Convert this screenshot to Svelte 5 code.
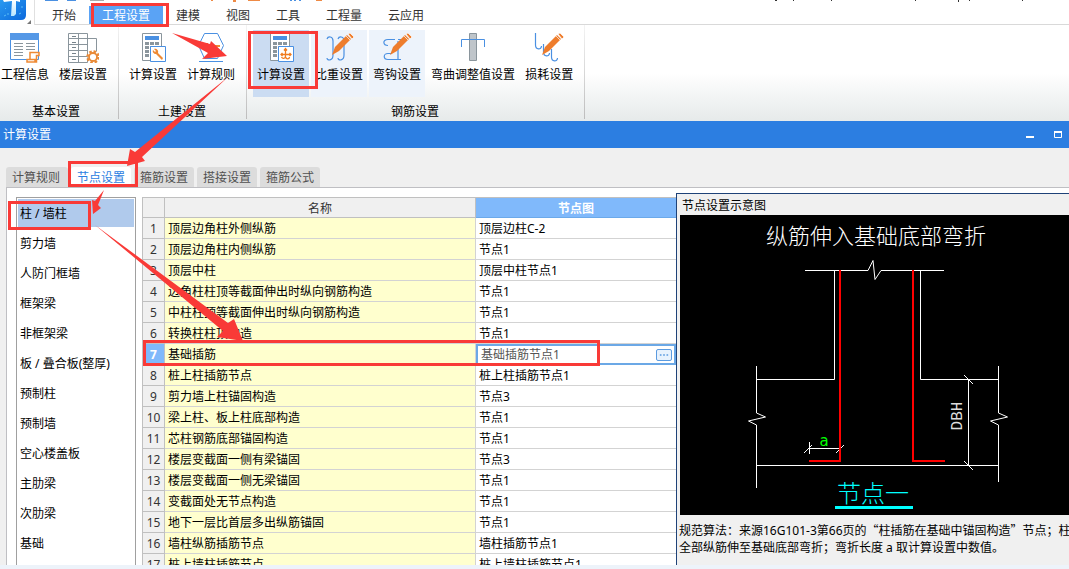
<script>
  const menus = ['开始', '工程设置', '建模', '视图', '工具', '工程量', '云应用'];
  const groups = [
    { name: '基本设置', kind: 'compact', tools: [['info', '工程信息'], ['floor', '楼层设置']] },
    { name: '土建设置', kind: '', tools: [['calc', '计算设置'], ['rule', '计算规则']] },
    {
      name: '钢筋设置', kind: '',
      tools: [
        ['steel', '计算设置', 'active'], ['weight', '比重设置', 'soft'], ['hook', '弯钩设置', 'soft'],
        ['bend', '弯曲调整值设置'], ['loss', '损耗设置']
      ]
    }
  ];
  const tabs = ['计算规则', '节点设置', '箍筋设置', '搭接设置', '箍筋公式'];
  const members = ['柱 / 墙柱', '剪力墙', '人防门框墙', '框架梁', '非框架梁', '板 / 叠合板(整厚)', '预制柱', '预制墙', '空心楼盖板', '主肋梁', '次肋梁', '基础'];
  const rows = [
    ['顶层边角柱外侧纵筋', '顶层边柱C-2'],
    ['顶层边角柱内侧纵筋', '节点1'],
    ['顶层中柱', '顶层中柱节点1'],
    ['边角柱柱顶等截面伸出时纵向钢筋构造', '节点1'],
    ['中柱柱顶等截面伸出时纵向钢筋构造', '节点1'],
    ['转换柱柱顶构造', '节点1'],
    ['基础插筋', '基础插筋节点1'],
    ['桩上柱插筋节点', '桩上柱插筋节点1'],
    ['剪力墙上柱锚固构造', '节点3'],
    ['梁上柱、板上柱底部构造', '节点1'],
    ['芯柱钢筋底部锚固构造', '节点1'],
    ['楼层变截面一侧有梁锚固', '节点3'],
    ['楼层变截面一侧无梁锚固', '节点1'],
    ['变截面处无节点构造', '节点1'],
    ['地下一层比首层多出纵筋锚固', '节点1'],
    ['墙柱纵筋插筋节点', '墙柱插筋节点1'],
    ['桩上墙柱插筋节点', '桩上墙柱插筋节点1']
  ];
  let menu = $state('工程设置');
  let tab = $state('节点设置');
  let member = $state('柱 / 墙柱');
  let node = $state('基础插筋节点1');
</script>

{#snippet calculator()}
  <path d="M5.500 .5h19v27h-19z" fill="#fff" stroke="#8a959c" />
  <path d="M8 3h14v4H8z" fill="#4a90e2" />
  <path d="M8 9h4v3H8zM13 9h4v3h-4zM18 9h4v3h-4zM8 13h4v3H8zM13 13h4v3h-4zM8 17h4v3H8zM8 21h4v3H8z" fill="#8a959c" />
  <path d="M13.500 13.500h15v15h-15z" fill="#fff" stroke="#4a90e2" />
{/snippet}

{#snippet pencil()}
  <path d="M9 22l3-8L24 2l4 4L16 18z" fill="#ee7d2d" />
  <path d="M25 1l2-1 4 4-2 2zM23 3l4 4" fill="#ee7d2d" stroke="#fff" stroke-width=".7" />
{/snippet}

{#snippet icon(name)}
  <svg class="icon" viewBox="0 0 32 30" aria-hidden="true">
    {#if name === 'info'}
      <path d="M1.500 .5h28v26h-28z" fill="#fff" stroke="#4a90e2" />
      <path d="M1 0h29v7H1z" fill="#5598e6" />
      <path d="M5 10.500h9M5 13.500h9M5 16.500h9M5 19.500h9M5 22.500h9M17 10.500h9M17 13.500h9M17 16.500h9" stroke="#8a959c" />
      <path d="M21 26V19.500h9v3h-2.500V29H18v-2.500h8V29" fill="#fff" stroke="#ee8a35" stroke-width="1.500" />
    {:else if name === 'floor'}
      <path d="M1.500 .5h19v29h-19zM1.500 5.500h19M1.500 11.500h19M1.500 17.500h19M1.500 23.500h19M11.500 0v29M20.500 5.500h9v13" fill="none" stroke="#8a959c" />
      <path d="M5 3.500h4M5 9.500h4M5 14.500h4M5 20.500h4M5 26.500h4" stroke="#77838b" />
      <circle cx="26" cy="24" r="5.500" fill="#fff" stroke="#e98a37" stroke-width="2.500" stroke-dasharray="2.500 1.800" />
      <circle cx="26" cy="24" r="4" fill="#fff" stroke="#e98a37" stroke-width="1.800" />
    {:else if name === 'calc'}
      {@render calculator()}
      <path d="M17 16c2-1 5 1 4 4l5 5-1 2-6-6c-2 0-4-2-3-4l2 2 1-1z" fill="#ee8a35" />
    {:else if name === 'rule'}
      <path d="M9.500 .5h13l6 12-6 13h-13l-6-13zM4 28.500h24" fill="#fff" stroke="#4a90e2" />
      <path d="M9 13h6M12 10v6M19 13h6" stroke="#ee8a35" stroke-width="2" />
    {:else if name === 'steel'}
      {@render calculator()}
      <path d="M16 21.500h10M20.500 16v7c0 3-3 3-4 1M20.500 24c1 3 4 2 4 0M19 17.500l1.500-2 1.500 2M17.500 20L16 21.500l1.500 1.500M24.500 20l1.500 1.500-1.500 1.500" fill="none" stroke="#f07c20" stroke-width="1.300" />
    {:else if name === 'weight'}
      <path d="M4 6c1-3 6-3 6 2v14c0 6-6 6-6 3M15 6c1-3 6-3 6 2v14c0 6-6 6-6 3" fill="none" stroke="#4a90e2" stroke-width="1.200" />
      {@render pencil()}
    {:else if name === 'hook'}
      <path d="M14 6.500H7c-6 0-5 6 0 6M17 6.500h6M11 20.500H7c-5 0-5 6 0 6h13M17 26.500V8" fill="none" stroke="#4a90e2" stroke-width="1.200" />
      {@render pencil()}
    {:else if name === 'bend'}
      <path d="M12.500 .5h7v27h-7z" fill="#bfc5ca" stroke="#8a959c" />
      <path d="M4.500 14V6.500h23V14" fill="none" stroke="#4a90e2" />
    {:else}
      <path d="M2.500 0v12c0 5 6 5 6 1M10.500 11v8c0 5 6 5 6 1M18.500 16v8c0 5 6 5 6 1" fill="none" stroke="#4a90e2" stroke-width="1.200" />
      {@render pencil()}
    {/if}
  </svg>
{/snippet}

<div class="app">
  <header class="menubar">
    <svg class="logo" viewBox="0 0 39 25" aria-hidden="true">
      <defs>
        <linearGradient id="logo-blue" x1="0" y1="0" x2="1" y2="1">
          <stop offset="0" stop-color="#2a9af0" />
          <stop offset="1" stop-color="#0b68dc" />
        </linearGradient>
        <linearGradient id="logo-stem" x1="0" y1="0" x2="0" y2="1">
          <stop offset="0" stop-color="#fff" />
          <stop offset="1" stop-color="#b8e6ff" />
        </linearGradient>
      </defs>
      <path d="M0 0h26v15q0 5-5 5H0z" fill="url(#logo-blue)" />
      <path d="M3 0h17v2l-4-1v13l-2 2h-3l1-15-8 1z" fill="url(#logo-stem)" />
      <path d="M4 16l2-1M19 14l2-1M22 6v2M5 8l1 1M8 13v2" stroke="#58bdf8" fill="none" />
      <path d="M31 20v4h-4z" fill="#777" />
      <path d="M34.500 0v25" stroke="#e0e0e0" />
    </svg>
    <nav>
      {#each menus as m}
        <button class:current={menu === m} onclick={() => (menu = m)}>{m}</button>
      {/each}
    </nav>
    <svg class="quick" viewBox="0 0 1034 2" aria-hidden="true">
      <path d="M10 0h13v1H10zM32 0h9v1h-9zM255 0h2v1h-2zM259 0h2v1h-2zM264 0h2v1h-2z" fill="#4a90e2" />
      <path d="M55 0h14v1H55z" fill="#aaa" />
      <path d="M176 0h2v1h-2zM198 0h3v2h-3zM213 0h12v1h-12zM281 0h6v1h-6z" fill="#ee8a45" />
      <path d="M740 0h2v1h-2zM758 0h1v1h-1zM796 0h1v1h-1zM880 0h1v1h-1zM923 0h1v2h-1zM934 0h1v1h-1zM987 0h1v1h-1z" fill="#333" />
    </svg>
  </header>

  <section class="ribbon">
    {#each groups as g}
      <div class="group {g.kind}">
        <div class="tools">
          {#each g.tools as [ic, label, mode]}
            <button class="tool {mode ?? ''}">{@render icon(ic)}<span>{label}</span></button>
          {/each}
        </div>
        <div class="group-name">{g.name}</div>
      </div>
    {/each}
  </section>

  <div class="titlebar">
    <h1>计算设置</h1>
    <div class="window-buttons">
      <button aria-label="最小化"><svg viewBox="0 0 8 8"><path d="M0 5h8v2H0z" fill="#fff" /></svg></button>
      <button aria-label="最大化"><svg viewBox="0 0 8 8"><path d="M.5 1v5.500h7V1" fill="none" stroke="#fff" /><path d="M0 0h8v2H0z" fill="#fff" /></svg></button>
    </div>
  </div>

  <main>
    <div class="tabs" role="tablist">
      {#each tabs as t}
        <button role="tab" aria-selected={tab === t} onclick={() => (tab = t)}>{t}</button>
      {/each}
    </div>
    <div class="workspace">
      <div class="members">
        {#each members as m}
          <button class:chosen={member === m} onclick={() => (member = m)}>{m}</button>
        {/each}
      </div>

      <div class="grid">
        <table>
          <colgroup><col class="c-num" /><col /><col class="c-node" /></colgroup>
          <thead>
            <tr><th></th><th>名称</th><th class="picked">节点图</th></tr>
          </thead>
          <tbody>
            {#each rows as [name, value], i}
              <tr>
                <th class:picked={i === 6}>{i + 1}</th>
                <td class="name">{name}</td>
                {#if i === 6}
                  <td class="edit">
                    <div class="editor">
                      <input aria-label="节点图" bind:value={node} />
                      <button aria-label="选择节点">
                        <svg viewBox="0 0 16 12"><path d="M3 5h2v2H3zM7 5h2v2H7zM11 5h2v2h-2z" fill="#5b9be0" /></svg>
                      </button>
                    </div>
                  </td>
                {:else}
                  <td>{value}</td>
                {/if}
              </tr>
            {/each}
          </tbody>
        </table>
      </div>

      <aside>
        <h2>节点设置示意图</h2>
        <svg class="drawing" viewBox="680 215 389 300" preserveAspectRatio="xMidYMid meet">
          <text x="876" y="244" class="caption">纵筋伸入基础底部弯折</text>
          <g fill="none" stroke="#fff">
            <path d="M805 270.500h63l5-10 2 19 6-9h63M834.500 270v109.500H756M920.500 270v109.500H999M756 465.500h243" />
            <path d="M756.500 366v47l9 4-17 4 8 4v63M998.500 366v47l9 4-17 4 8 4v57" />
            <path d="M968.500 379v87M964 375l9 9M964 461l9 9M809.500 442v12M809 448.500h31M804 453l8-8M836 453l8-8" />
          </g>
          <path d="M840 270v191h-31M913 270v191h32" fill="none" stroke="#f00" stroke-width="2" />
          <text x="824" y="446" class="offset">a</text>
          <text transform="translate(962 416) rotate(-90)" class="depth">DBH</text>
          <text x="873" y="502" class="node-name">节点一</text>
          <path d="M835 506h78v3h-78z" fill="#0ff" />
        </svg>
        <p>规范算法：来源16G101-3第66页的<span class="quoted">“柱插筋在基础中锚固构造”</span>节点；柱<br />全部纵筋伸至基础底部弯折；弯折长度 a 取计算设置中数值。</p>
      </aside>
    </div>
  </main>

  <svg class="notes" width="620" height="380" aria-hidden="true">
    <g fill="none" stroke="#f93a37" stroke-width="3">
      <path d="M92.500 4.500h75v21h-75zM249.500 32.500h67v55h-67zM69.500 162.500h67v23h-67zM9.500 202.500h80v26h-80zM144.500 341.500h454v23h-454z" />
    </g>
    <g fill="#f93a37">
      <path d="M172 33l38 11 1-3 16 15-25 3 6-6z" />
      <path d="M228 77l-86 80 3 4-18 5 3-17 5 3z" />
      <path d="M104 190l-6 15 3 3-8 6-1-14 3 1z" />
      <path d="M95 225l133 98 6-4 9 22-26-4 6-6z" />
    </g>
  </svg>
</div>

<style>
  :global(body) { margin: 0; }
  .app {
    position: relative;
    display: flex;
    flex-direction: column;
    box-sizing: border-box;
    height: 100vh;
    padding-bottom: 4px;
    overflow: hidden;
    background: #edf3fa;
    color: #000;
    font: 12px/16px "Noto Sans", "Noto Sans CJK SC", sans-serif;
  }
  button, input { font: inherit; color: inherit; border: 0; margin: 0; padding: 0; background: none; }
  button { white-space: nowrap; }
  h1, h2, p { margin: 0; font: inherit; }

  .menubar { position: relative; display: flex; height: 25px; background: #fff; flex: none; }
  .menubar::after { content: ""; position: absolute; left: 35px; right: 0; bottom: 0; height: 1px; background: #d9d9d9; }
  .logo { width: 39px; height: 25px; flex: none; }
  .quick { position: absolute; left: 35px; top: 0; width: 1034px; height: 2px; }
  nav { display: flex; padding-top: 6px; }
  nav button { padding: 2px 13px 0; height: 18px; color: #333; }
  nav .current { background: #5aa3f5; color: #fff; }

  .ribbon { display: flex; flex: none; height: 96px; background: linear-gradient(#fff 0 50%, #e6eaea); }
  .group { display: flex; flex-direction: column; padding: 5px 7px 0 6px; border-right: 1px solid; border-image: linear-gradient(#f4f4f4, #bcbcbc) 1; margin-bottom: 2px; }
  .tools { display: flex; gap: 2px; }
  .tool { display: flex; flex-direction: column; align-items: center; gap: 4px; height: 67px; padding: 3px 4px 0; box-sizing: border-box; }
  .compact { padding: 5px 6px 0 0; }
  .compact .tools { gap: 8px; padding-right: 4px; }
  .compact .tool { padding: 3px 1px 0; }
  .tool.active { background: #cbdcf2; }
  .tool.soft { background: #edf3fb; }
  .icon { width: 32px; height: 30px; }
  .group-name { text-align: center; padding-top: 7px; }

  .titlebar { display: flex; align-items: center; justify-content: space-between; flex: none; height: 27px; padding: 0 3px; background: #2c7ee1; color: #fff; }
  .window-buttons { display: flex; gap: 12px; }
  .window-buttons button { width: 16px; height: 16px; }
  .window-buttons svg { display: block; width: 8px; height: 8px; margin: 0 auto; }

  main { display: flex; flex-direction: column; flex: 1; min-height: 0; padding: 19px 0 0 6px; background: #f0f0f0; }
  .tabs { display: flex; gap: 3px; flex: none; }
  .tabs button { height: 20px; padding: 2px 6px 0; background: #dcdcdc; color: #505050; border-radius: 3px 3px 0 0; }
  .tabs button:first-child { padding-right: 8px; }
  .tabs button[aria-selected="true"] { background: #fff; color: #2c7ee1; }
  .workspace {
    display: grid;
    grid-template-columns: 120px minmax(0, 540fr) minmax(0, 393fr);
    flex: 1;
    min-height: 0;
    padding: 5px 0 0 9px;
    background: #fff;
    border: solid #bfbfc3;
    border-width: 1px 0 0 1px;
    overflow: hidden;
  }
  .members { display: flex; flex-direction: column; margin-top: 4px; padding: 1px; border: 1px solid #a0a0a0; border-bottom: 0; }
  .members button { flex: none; height: 28px; margin-bottom: 2px; padding: 2px 0 0 2px; text-align: left; }
  .members .chosen { background: #b0caec; }

  .grid { margin: 4px 0 0 6px; overflow: hidden; }
  table { width: 100%; border-collapse: separate; border-spacing: 0; table-layout: fixed; border: solid #c0c0c0; border-width: 1px 0 0 1px; }
  .c-num { width: 22px; }
  .c-node { width: 200px; }
  th, td { box-sizing: border-box; height: 21px; padding: 2px 0 0 3px; text-align: left; font-weight: 400; line-height: 16px; border: solid #d3d3d3; border-width: 0 1px 1px 0; white-space: nowrap; overflow: hidden; background: #fff; }
  th { padding: 2px 0 0; text-align: center; background: #f0f0f0; color: #333; border-color: #c0c0c0; }
  thead th { height: 20px; }
  td:last-child, thead th:last-child { border-right: 0; }
  td.name { background: #ffffce; }
  th.picked { background: #80b9fb; color: #fff; font-weight: 700; }
  thead .picked { border-bottom-color: #6ba9ea; }
  td.edit { padding: 0; border: 0; }
  .editor { display: flex; align-items: center; height: 21px; box-sizing: border-box; border: 2px solid #6ba8e6; padding: 0 2px 0 3px; }
  .editor input { flex: 1; min-width: 0; width: 0; height: 16px; color: #555; outline: 0; }
  .editor button { display: flex; width: 16px; height: 12px; border: 1px solid #5b9be0; border-radius: 2px; background: #e8f2fd; }
  .editor button svg { width: 100%; }

  aside { border: solid #1e4278; border-width: 1px 0 0 1px; background: #f0f0f0; padding-left: 3px; overflow: hidden; }
  h2 { padding: 4px 2px 1px; }
  .drawing { display: block; width: 100%; height: 300px; background: #000; }
  .caption, .node-name { font: 300 22px "Noto Sans CJK SC", sans-serif; text-anchor: middle; fill: #fff; }
  .node-name { font-size: 24px; fill: #0ff; }
  .offset { font: 15px "DejaVu Sans", sans-serif; text-anchor: middle; fill: #0f0; }
  .depth { font: 16px "Liberation Mono", monospace; text-anchor: middle; fill: #ddd; }
  aside p { padding-top: 7px; margin-left: -1px; line-height: 17px; white-space: nowrap; }
  .quoted { font-family: "Noto Sans CJK SC", sans-serif; line-height: 1; }

  .notes { position: absolute; left: 0; top: 0; pointer-events: none; }
</style>
